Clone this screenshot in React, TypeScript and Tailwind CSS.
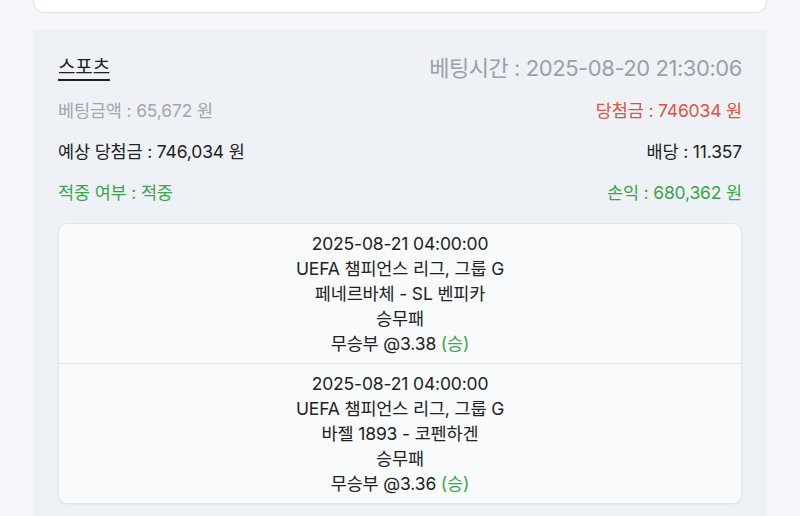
import React from "react";

type Pick = {
  time: string;
  league: string;
  match: string;
  market: string;
  pick: string;
  odds: string;
  result: string;
};

const picks: Pick[] = [
  {
    time: "2025-08-21 04:00:00",
    league: "UEFA 챔피언스 리그, 그룹 G",
    match: "페네르바체 - SL 벤피카",
    market: "승무패",
    pick: "무승부",
    odds: "3.38",
    result: "승",
  },
  {
    time: "2025-08-21 04:00:00",
    league: "UEFA 챔피언스 리그, 그룹 G",
    match: "바젤 1893 - 코펜하겐",
    market: "승무패",
    pick: "무승부",
    odds: "3.36",
    result: "승",
  },
];

export default function App() {
  return (
    <div
      className="min-h-screen bg-[#f5f7fa] tracking-[-0.01em]"
      style={{ fontFamily: "Inter, 'Noto Sans CJK KR', sans-serif" }}
    >
      <div className="mx-[33px]">
        {/* previous card (cut off) */}
        <div className="h-[13px] bg-white border border-t-0 border-[#dfe5ec] rounded-b-[10px]" />

        {/* bet section */}
        <div className="mt-[16px] bg-[#eef2f7] px-[25px] pt-[22px] pb-[20px] h-[600px]">
          <div className="flex justify-between items-center h-[34px]">
            <span className="text-[19px] text-[#1f1f1f] underline underline-offset-[5px] decoration-[1.5px]">
              스포츠
            </span>
            <span className="text-[22px] text-[#9aa0a8] tracking-[-0.02em]">베팅시간 : 2025-08-20 21:30:06</span>
          </div>

          <div className="flex justify-between items-center h-[41px] mt-[6px] text-[17.5px]">
            <span className="text-[#a2a6ad]">베팅금액 : 65,672 원</span>
            <span className="text-[#e0533f]">당첨금 : 746034 원</span>
          </div>
          <div className="flex justify-between items-center h-[41px] text-[17.5px] text-[#222]">
            <span>예상 당첨금 : 746,034 원</span>
            <span>배당 : 11.357</span>
          </div>
          <div className="flex justify-between items-center h-[40px] text-[17.5px] text-[#3aa548]">
            <span>적중 여부 : 적중</span>
            <span>손익 : 680,362 원</span>
          </div>

          <div className="mt-[10px] bg-[#f8fafc] border border-[#e1e6ed] rounded-[9px] shadow-[0_1px_2px_rgba(0,0,0,0.04)]">
            {picks.map((p, i) => (
              <div
                key={i}
                className={
                  "flex flex-col items-center py-[7px] text-[17.5px] leading-[25px] text-[#222] " +
                  (i > 0 ? "border-t border-[#e3e7ed]" : "")
                }
              >
                <div>{p.time}</div>
                <div>{p.league}</div>
                <div>{p.match}</div>
                <div>{p.market}</div>
                <div>
                  {p.pick} @{p.odds} <span className="text-[#3aa548]">({p.result})</span>
                </div>
              </div>
            ))}
          </div>
        </div>
      </div>
    </div>
  );
}
